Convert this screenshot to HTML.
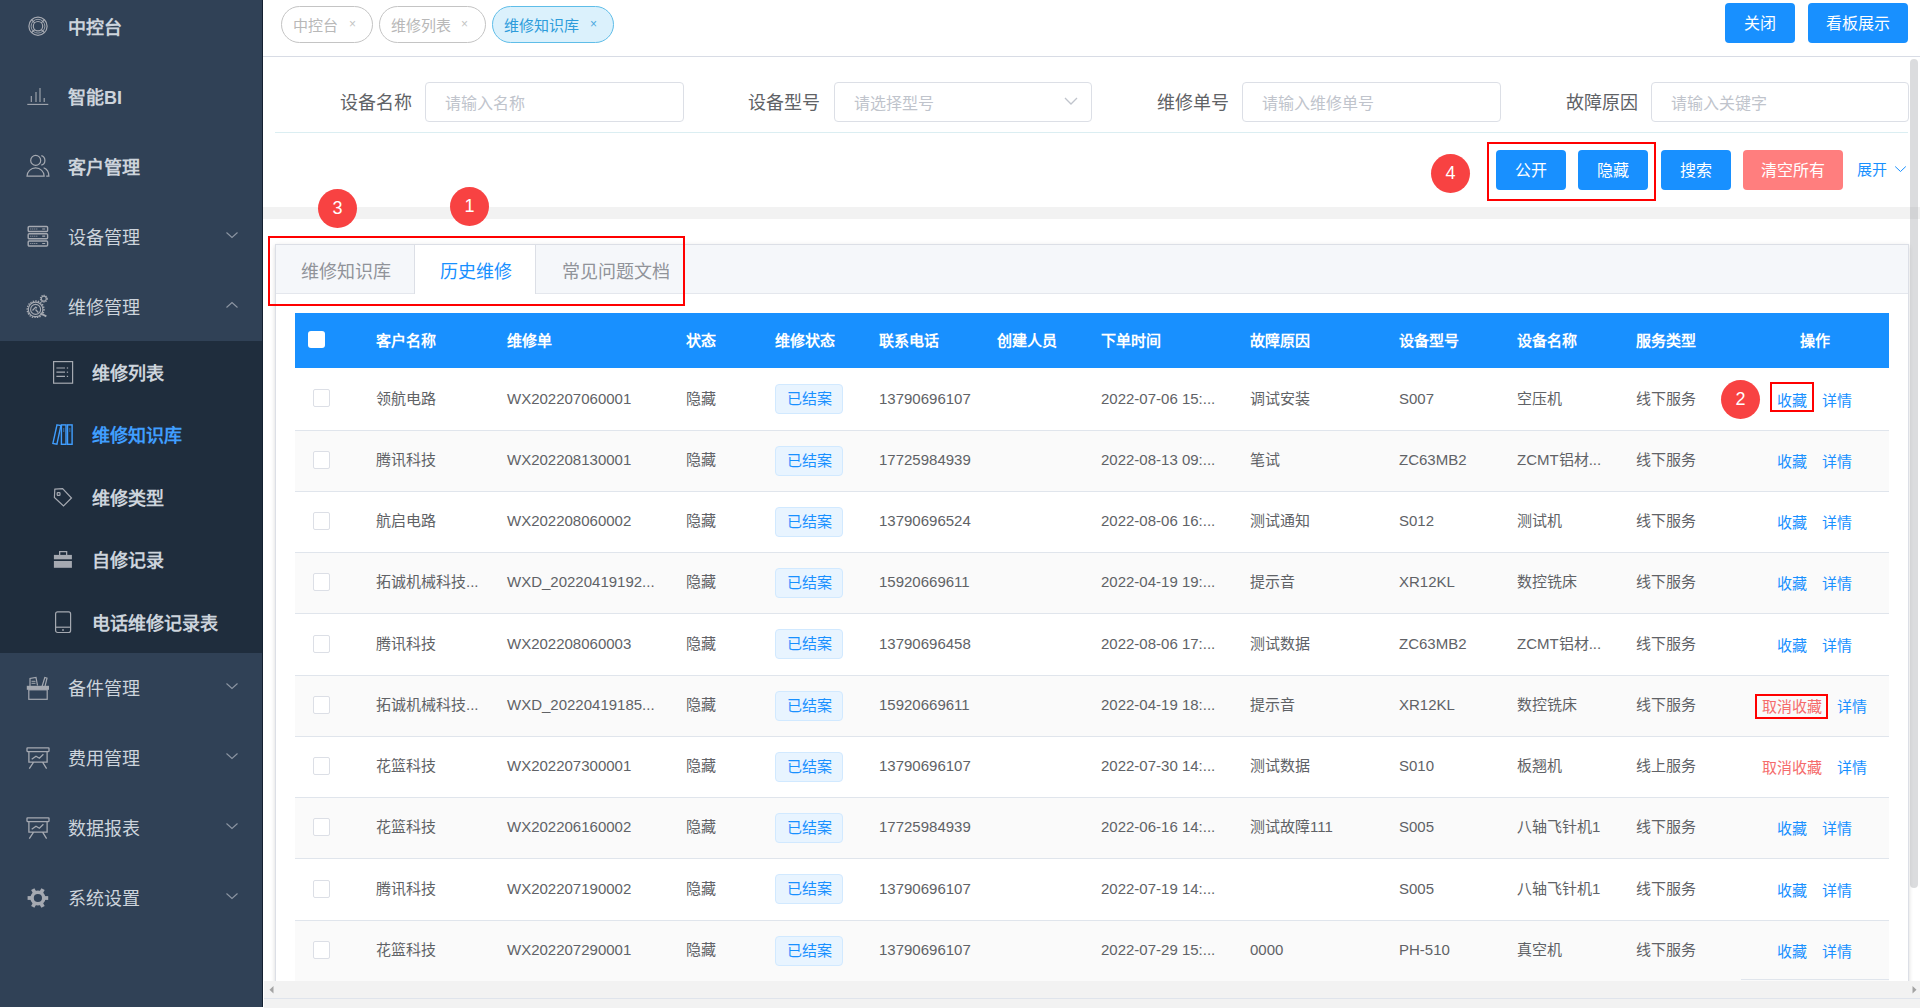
<!DOCTYPE html><html lang="zh-CN"><head><meta charset="utf-8"><title>维修知识库</title><style>
*{box-sizing:border-box;margin:0;padding:0}
html,body{width:1920px;height:1008px;overflow:hidden;background:#fff}
body{font-family:"Liberation Sans",sans-serif;color:#606266;position:relative}
.abs{position:absolute}
.sb{position:absolute;left:0;top:0;width:263px;height:1007px;background:#304156;overflow:hidden;border-right:1px solid #142131}
.sb .it{position:absolute;left:0;width:263px;height:70px}
.sb .it .tx{position:absolute;left:68px;top:2px;line-height:70px;font-size:18px;color:#cdd4dc;white-space:nowrap}
.sb .it .tx.b{font-weight:bold}
.sb .it svg.ic{position:absolute;left:27px;top:25px}
.sb .it svg.ch{position:absolute;left:225px;top:30px}
.sb .sub{position:absolute;left:0;top:341px;width:263px;height:312px;background:#1f2d3d}
.sb .si{position:absolute;left:0;width:263px;height:62.4px}
.sb .si .tx{position:absolute;left:92px;top:2px;line-height:62.4px;font-size:18px;font-weight:bold;color:#cdd4dc;white-space:nowrap}
.sb .si svg{position:absolute;left:52px;top:20px}
.tag{position:absolute;top:6px;height:37px;border:1px solid #c4c4c4;border-radius:19px;font-size:15px;line-height:37px;color:#b8b8b8;padding-left:11px;white-space:nowrap}
.tag .x{position:absolute;top:-1px;font-size:12px;color:#c4c4c4}
.btn{position:absolute;height:40px;border-radius:4px;background:#1890ff;color:#fff;font-size:16px;line-height:42px;text-align:center;white-space:nowrap}
.lbl{position:absolute;top:83px;height:40px;line-height:40px;font-size:18px;color:#606266;white-space:nowrap}
.inp{position:absolute;top:82px;height:40px;width:259px;border:1px solid #dcdfe6;border-radius:4px;font-size:16px;line-height:41px;color:#c0c4cc;padding-left:19px;white-space:nowrap}
.badge{position:absolute;width:39px;height:39px;border-radius:50%;background:#f84242;color:#fff;font-size:18px;line-height:39px;text-align:center}
.redbox{position:absolute;border:2px solid #ff0000}
.th{position:absolute;top:313px;height:55px;line-height:55px;font-size:15px;font-weight:bold;color:#fff;white-space:nowrap}
.row{position:absolute;left:295px;width:1594px;border-bottom:1px solid #e0e5ec}
.row.s{background:#fafafa}
.td{position:absolute;top:0;font-size:15px;color:#606266;white-space:nowrap}
.cb{position:absolute;width:17px;height:18px;border:1px solid #dcdfe6;border-radius:2px;background:#fff}
.st{position:absolute;left:480px;width:68px;height:30px;border:1px solid #d1e9ff;background:#e8f4ff;border-radius:4px;color:#1890ff;font-size:15px;line-height:28px;text-align:center}
.lk{color:#1890ff}
.lkr{color:#f56c6c}
</style></head><body><div class="sb"><div class="it" style="top:-9px"><span class="tx b">中控台</span></div><div class="it" style="top:61px"><span class="tx b">智能BI</span></div><div class="it" style="top:131px"><span class="tx b">客户管理</span></div><div class="it" style="top:201px"><span class="tx">设备管理</span><svg class="ch" width="14" height="8" viewBox="0 0 14 8"><path d="M1.5 1.5l5.5 5 5.5-5" fill="none" stroke="#8d96a3" stroke-width="1.1"/></svg></div><div class="it" style="top:271px"><span class="tx">维修管理</span><svg class="ch" width="14" height="8" viewBox="0 0 14 8"><path d="M1.5 6.5l5.5-5 5.5 5" fill="none" stroke="#8d96a3" stroke-width="1.1"/></svg></div><div class="it" style="top:652px"><span class="tx">备件管理</span><svg class="ch" width="14" height="8" viewBox="0 0 14 8"><path d="M1.5 1.5l5.5 5 5.5-5" fill="none" stroke="#8d96a3" stroke-width="1.1"/></svg></div><div class="it" style="top:722px"><span class="tx">费用管理</span><svg class="ch" width="14" height="8" viewBox="0 0 14 8"><path d="M1.5 1.5l5.5 5 5.5-5" fill="none" stroke="#8d96a3" stroke-width="1.1"/></svg></div><div class="it" style="top:792px"><span class="tx">数据报表</span><svg class="ch" width="14" height="8" viewBox="0 0 14 8"><path d="M1.5 1.5l5.5 5 5.5-5" fill="none" stroke="#8d96a3" stroke-width="1.1"/></svg></div><div class="it" style="top:862px"><span class="tx">系统设置</span><svg class="ch" width="14" height="8" viewBox="0 0 14 8"><path d="M1.5 1.5l5.5 5 5.5-5" fill="none" stroke="#8d96a3" stroke-width="1.1"/></svg></div><div class="sub"><div class="si" style="top:0.0px"><span class="tx">维修列表</span></div><div class="si" style="top:62.4px"><span class="tx" style="color:#409eff">维修知识库</span></div><div class="si" style="top:124.8px"><span class="tx">维修类型</span></div><div class="si" style="top:187.2px"><span class="tx">自修记录</span></div><div class="si" style="top:249.6px"><span class="tx">电话维修记录表</span></div></div></div><svg class="abs" style="left:26px;top:14px" width="24" height="24" viewBox="0 0 24 24"><g fill="none" stroke="#a5a9b1" stroke-width="1.2"><circle cx="12" cy="12.2" r="9.1"/><circle cx="12" cy="12.2" r="4.7"/><circle cx="12" cy="12.2" r="6.9" stroke-width="0.9"/><path d="M8.7 8.9L5.6 5.8M15.3 8.9l3.1-3.1M8.7 15.5l-3.1 3.1M15.3 15.5l3.1 3.1"/></g></svg><svg class="abs" style="left:26px;top:84px" width="24" height="24" viewBox="0 0 24 24"><g fill="none" stroke="#a5a9b1" stroke-width="1.1"><path d="M1.3 20.4h21"/><path d="M5.3 12v6M10 8v10M14 4v14M18.2 14v4"/></g></svg><svg class="abs" style="left:26px;top:154px" width="24" height="24" viewBox="0 0 24 24"><g fill="none" stroke="#a5a9b1" stroke-width="1.2"><circle cx="9.7" cy="6.4" r="5"/><path d="M15.3 1.6a5 5 0 0 1 0 9.6"/><path d="M1 22.2a8.6 8.3 0 0 1 17.2 0z"/><path d="M17.6 13.8c3.2 1.2 5.3 4.5 5.3 8.4h-2.7"/></g></svg><svg class="abs" style="left:26px;top:224px" width="24" height="24" viewBox="0 0 24 24"><g fill="none" stroke="#a5a9b1" stroke-width="1.4"><rect x="2.2" y="2.5" width="19.4" height="5" rx="1"/><rect x="2.2" y="9.7" width="19.4" height="5" rx="1"/><rect x="2.2" y="17" width="19.4" height="5" rx="1"/></g><g stroke="#a5a9b1" stroke-width="1" stroke-dasharray="1 1"><path d="M4.3 5h7.7M4.3 12.2h7.7M4.3 19.5h7.7"/></g><g stroke="#a5a9b1" stroke-width="1.2"><path d="M16.2 5h3M16.2 12.2h3M16.2 19.5h3"/></g></svg><svg class="abs" style="left:26px;top:294px" width="24" height="24" viewBox="0 0 24 24"><g fill="none" stroke="#a5a9b1"><circle cx="9.6" cy="15.4" r="7.3" stroke-width="1.2"/><circle cx="9.6" cy="15.4" r="8.4" stroke-width="1.4" stroke-dasharray="1.4 1.2"/><circle cx="9.6" cy="15.4" r="5" stroke-width="1.1"/><circle cx="17.8" cy="4.7" r="2.5" stroke-width="1.2"/><circle cx="17.8" cy="4.7" r="3.4" stroke-width="1.2" stroke-dasharray="1.2 1"/><path d="M6.5 16.5l3.2-3.4 1.2 1.2M9.5 15.5l2.8 3" stroke-width="1.3"/><path d="M14.5 19.2l5.8 3.2" stroke-width="1.8"/></g></svg><svg class="abs" style="left:26px;top:676px" width="24" height="24" viewBox="0 0 24 24"><g fill="none" stroke="#a5a9b1" stroke-width="1.2"><rect x="2.8" y="13.8" width="18.4" height="9.5"/><path d="M4 10V2.5l6-1 1.5 8M15.6 12l3.2-10.5 2.2.6-2.3 9.5"/><path d="M5.5 5.3h4M5.5 7.3h4" stroke-width="1"/></g><rect x="0.8" y="9.8" width="22.2" height="4" fill="#a5a9b1"/></svg><svg class="abs" style="left:26px;top:746px" width="24" height="24" viewBox="0 0 24 24"><g fill="none" stroke="#a5a9b1" stroke-width="1.3"><rect x="1" y="1.8" width="22" height="3.8" rx=".5"/><path d="M2.9 5.6v10.6h18.2V5.6M7.6 16.2L3.3 22.6M16.6 16.2l4 6.4M5.7 13.3l4.3-3.1 3.4 2 4-3.9"/></g></svg><svg class="abs" style="left:26px;top:816px" width="24" height="24" viewBox="0 0 24 24"><g fill="none" stroke="#a5a9b1" stroke-width="1.3"><rect x="1" y="1.8" width="22" height="3.8" rx=".5"/><path d="M2.9 5.6v10.6h18.2V5.6M7.6 16.2L3.3 22.6M16.6 16.2l4 6.4M5.7 13.3l4.3-3.1 3.4 2 4-3.9"/></g></svg><svg class="abs" style="left:26px;top:886px" width="24" height="24" viewBox="0 0 24 24"><g fill="#a5a9b1"><circle cx="11.9" cy="12" r="7.6"/><rect x="17" y="10.1" width="5.2" height="3.8" transform="rotate(0 11.9 12)"/><rect x="17" y="10.1" width="5.2" height="3.8" transform="rotate(60 11.9 12)"/><rect x="17" y="10.1" width="5.2" height="3.8" transform="rotate(120 11.9 12)"/><rect x="17" y="10.1" width="5.2" height="3.8" transform="rotate(180 11.9 12)"/><rect x="17" y="10.1" width="5.2" height="3.8" transform="rotate(240 11.9 12)"/><rect x="17" y="10.1" width="5.2" height="3.8" transform="rotate(300 11.9 12)"/></g><circle cx="11.9" cy="12" r="4.1" fill="#304156"/></svg><svg class="abs" style="left:52px;top:360px" width="24" height="24" viewBox="0 0 24 24"><g fill="none" stroke="#a5a9b1" stroke-width="1.2"><rect x="1.6" y="1.6" width="19" height="21.6"/><path d="M4.4 8h8.6M4.4 12.2h8.6M4.4 16.4h8.6"/></g><g fill="#a5a9b1"><rect x="14.8" y="7.4" width="1.3" height="1.2"/><rect x="14.8" y="11.6" width="1.3" height="1.2"/><rect x="14.8" y="15.8" width="1.3" height="1.2"/></g></svg><svg class="abs" style="left:52px;top:424px" width="24" height="24" viewBox="0 0 24 24"><g fill="none" stroke="#409eff" stroke-width="1.4"><path d="M5 0.9l3.9 0.7L4.9 20.2l-4-.8z"/><rect x="9.4" y="0.9" width="4.6" height="19.4"/><rect x="15.5" y="0.9" width="4.6" height="19.4"/><path d="M7.3 4.5h.01M7 6.5h.01M6.7 8.5h.01M11.7 4.5v4M17.8 4.5v4" stroke-width="1.2" stroke-dasharray="1 1"/></g></svg><svg class="abs" style="left:52px;top:486px" width="24" height="24" viewBox="0 0 24 24"><g fill="none" stroke="#a5a9b1" stroke-width="1.2"><path d="M2.8 3.2l7.8-.6 8.9 9.4-8 8-9.1-8.6z"/><rect x="5.2" y="6.6" width="2.8" height="2.8" rx=".6"/></g></svg><svg class="abs" style="left:52px;top:548px" width="24" height="24" viewBox="0 0 24 24"><g fill="#a5a9b1"><path d="M7 3h8.3v3.9h-1.3V4.2H8.3v2.7H7z"/><rect x="1.9" y="6.9" width="18" height="4.4"/><rect x="1.9" y="13" width="18" height="6.8"/></g></svg><svg class="abs" style="left:52px;top:610px" width="24" height="24" viewBox="0 0 24 24"><g fill="none" stroke="#a5a9b1" stroke-width="1.2"><rect x="3.6" y="1.9" width="15" height="20.6" rx="2"/><path d="M3.6 17.2h15"/></g><rect x="10.2" y="19.2" width="1.6" height="1.6" fill="#a5a9b1"/></svg><div class="abs" style="left:263px;top:0;width:1657px;height:57px;background:#fff;border-bottom:1px solid #d8dce5"></div><div class="tag" style="left:281px;width:92px">中控台<span class="x" style="left:67px">×</span></div><div class="tag" style="left:379px;width:107px">维修列表<span class="x" style="left:81px">×</span></div><div class="tag" style="left:492px;width:122px;border-color:#5fbde8;background:#dbf1fc;color:#2d9cdb">维修知识库<span class="x" style="left:97px;color:#4aa8e0">×</span></div><div class="btn" style="left:1725px;top:3px;width:70px">关闭</div><div class="btn" style="left:1808px;top:3px;width:100px">看板展示</div><div class="lbl" style="left:340px">设备名称</div><div class="inp" style="left:425px;width:259px">请输入名称</div><div class="lbl" style="left:748px">设备型号</div><div class="inp" style="left:834px;width:258px">请选择型号</div><div class="lbl" style="left:1157px">维修单号</div><div class="inp" style="left:1242px;width:259px">请输入维修单号</div><div class="lbl" style="left:1566px">故障原因</div><div class="inp" style="left:1651px;width:258px">请输入关键字</div><svg class="abs" style="left:1064px;top:97px" width="14" height="8" viewBox="0 0 14 8"><path d="M1 1l6 6 6-6" fill="none" stroke="#c0c4cc" stroke-width="1.3"/></svg><div class="abs" style="left:275px;top:132px;width:1633px;height:1px;background:#dbeef2"></div><div class="badge" style="left:1431px;top:154px">4</div><div class="redbox" style="left:1487px;top:142px;width:169px;height:59px"></div><div class="btn" style="left:1496px;top:150px;width:70px">公开</div><div class="btn" style="left:1578px;top:150px;width:70px">隐藏</div><div class="btn" style="left:1661px;top:150px;width:70px">搜索</div><div class="btn" style="left:1743px;top:150px;width:100px;background:#ff7e7e">清空所有</div><div class="abs" style="left:1857px;top:150px;line-height:40px;font-size:15px;color:#1890ff">展开</div><svg class="abs" style="left:1894px;top:165px" width="13" height="8" viewBox="0 0 13 8"><path d="M1.2 1.5l5.3 5 5.3-5" fill="none" stroke="#1890ff" stroke-width="1"/></svg><div class="abs" style="left:263px;top:207px;width:1657px;height:12px;background:#f2f2f2"></div><div class="abs" style="left:275px;top:244px;width:1634px;height:760px;border:1px solid #dcdfe6;box-shadow:0 2px 4px rgba(0,0,0,.12),0 0 6px rgba(0,0,0,.04);background:#fff"></div><div class="abs" style="left:276px;top:245px;width:1632px;height:49px;background:#f5f7fa;border-bottom:1px solid #e4e7ed"></div><div class="abs" style="left:414px;top:245px;width:122px;height:49px;background:#fff;border-left:1px solid #dcdfe6;border-right:1px solid #dcdfe6"></div><div class="abs" style="left:301px;top:247px;line-height:50px;font-size:18px;color:#909399">维修知识库</div><div class="abs" style="left:440px;top:247px;line-height:50px;font-size:18px;color:#1890ff">历史维修</div><div class="abs" style="left:562px;top:247px;line-height:50px;font-size:18px;color:#909399">常见问题文档</div><div class="redbox" style="left:268px;top:236px;width:417px;height:70px"></div><div class="badge" style="left:318px;top:189px">3</div><div class="badge" style="left:450px;top:187px">1</div><div class="abs" style="left:295px;top:313px;width:1594px;height:55px;background:#1890ff"></div><div class="abs" style="left:308px;top:331px;width:17px;height:17px;background:#fff;border-radius:3px"></div><div class="th" style="left:376px">客户名称</div><div class="th" style="left:507px">维修单</div><div class="th" style="left:686px">状态</div><div class="th" style="left:775px">维修状态</div><div class="th" style="left:879px">联系电话</div><div class="th" style="left:997px">创建人员</div><div class="th" style="left:1101px">下单时间</div><div class="th" style="left:1250px">故障原因</div><div class="th" style="left:1399px">设备型号</div><div class="th" style="left:1517px">设备名称</div><div class="th" style="left:1636px">服务类型</div><div class="th" style="left:1800px">操作</div><div class="row" style="top:368px;height:63px"><div class="cb" style="left:18px;top:21px"></div><div class="td" style="left:81px;top:0px;line-height:62px">领航电路</div><div class="td" style="left:212px;top:0px;line-height:62px">WX202207060001</div><div class="td" style="left:391px;top:0px;line-height:62px">隐藏</div><div class="st" style="top:16px">已结案</div><div class="td" style="left:584px;top:0px;line-height:62px">13790696107</div><div class="td" style="left:806px;top:0px;line-height:62px">2022-07-06 15:...</div><div class="td" style="left:955px;top:0px;line-height:62px">调试安装</div><div class="td" style="left:1104px;top:0px;line-height:62px">S007</div><div class="td" style="left:1222px;top:0px;line-height:62px">空压机</div><div class="td" style="left:1341px;top:0px;line-height:62px">线下服务</div><div class="td" style="left:1482px;top:0px;line-height:62px;color:#1890ff;top:1.5px">收藏</div><div class="td" style="left:1527px;top:0px;line-height:62px;color:#1890ff;top:1.5px">详情</div></div><div class="row s" style="top:431px;height:61px"><div class="cb" style="left:18px;top:20px"></div><div class="td" style="left:81px;top:-1px;line-height:60px">腾讯科技</div><div class="td" style="left:212px;top:-1px;line-height:60px">WX202208130001</div><div class="td" style="left:391px;top:-1px;line-height:60px">隐藏</div><div class="st" style="top:15px">已结案</div><div class="td" style="left:584px;top:-1px;line-height:60px">17725984939</div><div class="td" style="left:806px;top:-1px;line-height:60px">2022-08-13 09:...</div><div class="td" style="left:955px;top:-1px;line-height:60px">笔试</div><div class="td" style="left:1104px;top:-1px;line-height:60px">ZC63MB2</div><div class="td" style="left:1222px;top:-1px;line-height:60px">ZCMT铝材...</div><div class="td" style="left:1341px;top:-1px;line-height:60px">线下服务</div><div class="td" style="left:1482px;top:-1px;line-height:60px;color:#1890ff;top:0.5px">收藏</div><div class="td" style="left:1527px;top:-1px;line-height:60px;color:#1890ff;top:0.5px">详情</div></div><div class="row" style="top:492px;height:61px"><div class="cb" style="left:18px;top:20px"></div><div class="td" style="left:81px;top:-1px;line-height:60px">航启电路</div><div class="td" style="left:212px;top:-1px;line-height:60px">WX202208060002</div><div class="td" style="left:391px;top:-1px;line-height:60px">隐藏</div><div class="st" style="top:15px">已结案</div><div class="td" style="left:584px;top:-1px;line-height:60px">13790696524</div><div class="td" style="left:806px;top:-1px;line-height:60px">2022-08-06 16:...</div><div class="td" style="left:955px;top:-1px;line-height:60px">测试通知</div><div class="td" style="left:1104px;top:-1px;line-height:60px">S012</div><div class="td" style="left:1222px;top:-1px;line-height:60px">测试机</div><div class="td" style="left:1341px;top:-1px;line-height:60px">线下服务</div><div class="td" style="left:1482px;top:-1px;line-height:60px;color:#1890ff;top:0.5px">收藏</div><div class="td" style="left:1527px;top:-1px;line-height:60px;color:#1890ff;top:0.5px">详情</div></div><div class="row s" style="top:553px;height:61px"><div class="cb" style="left:18px;top:20px"></div><div class="td" style="left:81px;top:-1px;line-height:60px">拓诚机械科技...</div><div class="td" style="left:212px;top:-1px;line-height:60px">WXD_20220419192...</div><div class="td" style="left:391px;top:-1px;line-height:60px">隐藏</div><div class="st" style="top:15px">已结案</div><div class="td" style="left:584px;top:-1px;line-height:60px">15920669611</div><div class="td" style="left:806px;top:-1px;line-height:60px">2022-04-19 19:...</div><div class="td" style="left:955px;top:-1px;line-height:60px">提示音</div><div class="td" style="left:1104px;top:-1px;line-height:60px">XR12KL</div><div class="td" style="left:1222px;top:-1px;line-height:60px">数控铣床</div><div class="td" style="left:1341px;top:-1px;line-height:60px">线下服务</div><div class="td" style="left:1482px;top:-1px;line-height:60px;color:#1890ff;top:0.5px">收藏</div><div class="td" style="left:1527px;top:-1px;line-height:60px;color:#1890ff;top:0.5px">详情</div></div><div class="row" style="top:614px;height:62px"><div class="cb" style="left:18px;top:21px"></div><div class="td" style="left:81px;top:-1px;line-height:61px">腾讯科技</div><div class="td" style="left:212px;top:-1px;line-height:61px">WX202208060003</div><div class="td" style="left:391px;top:-1px;line-height:61px">隐藏</div><div class="st" style="top:15px">已结案</div><div class="td" style="left:584px;top:-1px;line-height:61px">13790696458</div><div class="td" style="left:806px;top:-1px;line-height:61px">2022-08-06 17:...</div><div class="td" style="left:955px;top:-1px;line-height:61px">测试数据</div><div class="td" style="left:1104px;top:-1px;line-height:61px">ZC63MB2</div><div class="td" style="left:1222px;top:-1px;line-height:61px">ZCMT铝材...</div><div class="td" style="left:1341px;top:-1px;line-height:61px">线下服务</div><div class="td" style="left:1482px;top:-1px;line-height:61px;color:#1890ff;top:0.5px">收藏</div><div class="td" style="left:1527px;top:-1px;line-height:61px;color:#1890ff;top:0.5px">详情</div></div><div class="row s" style="top:676px;height:61px"><div class="cb" style="left:18px;top:20px"></div><div class="td" style="left:81px;top:-1px;line-height:60px">拓诚机械科技...</div><div class="td" style="left:212px;top:-1px;line-height:60px">WXD_20220419185...</div><div class="td" style="left:391px;top:-1px;line-height:60px">隐藏</div><div class="st" style="top:15px">已结案</div><div class="td" style="left:584px;top:-1px;line-height:60px">15920669611</div><div class="td" style="left:806px;top:-1px;line-height:60px">2022-04-19 18:...</div><div class="td" style="left:955px;top:-1px;line-height:60px">提示音</div><div class="td" style="left:1104px;top:-1px;line-height:60px">XR12KL</div><div class="td" style="left:1222px;top:-1px;line-height:60px">数控铣床</div><div class="td" style="left:1341px;top:-1px;line-height:60px">线下服务</div><div class="td" style="left:1467px;top:-1px;line-height:60px;color:#f56c6c;top:0.5px">取消收藏</div><div class="td" style="left:1542px;top:-1px;line-height:60px;color:#1890ff;top:0.5px">详情</div></div><div class="row" style="top:737px;height:61px"><div class="cb" style="left:18px;top:20px"></div><div class="td" style="left:81px;top:-1px;line-height:60px">花篮科技</div><div class="td" style="left:212px;top:-1px;line-height:60px">WX202207300001</div><div class="td" style="left:391px;top:-1px;line-height:60px">隐藏</div><div class="st" style="top:15px">已结案</div><div class="td" style="left:584px;top:-1px;line-height:60px">13790696107</div><div class="td" style="left:806px;top:-1px;line-height:60px">2022-07-30 14:...</div><div class="td" style="left:955px;top:-1px;line-height:60px">测试数据</div><div class="td" style="left:1104px;top:-1px;line-height:60px">S010</div><div class="td" style="left:1222px;top:-1px;line-height:60px">板翘机</div><div class="td" style="left:1341px;top:-1px;line-height:60px">线上服务</div><div class="td" style="left:1467px;top:-1px;line-height:60px;color:#f56c6c;top:0.5px">取消收藏</div><div class="td" style="left:1542px;top:-1px;line-height:60px;color:#1890ff;top:0.5px">详情</div></div><div class="row s" style="top:798px;height:61px"><div class="cb" style="left:18px;top:20px"></div><div class="td" style="left:81px;top:-1px;line-height:60px">花篮科技</div><div class="td" style="left:212px;top:-1px;line-height:60px">WX202206160002</div><div class="td" style="left:391px;top:-1px;line-height:60px">隐藏</div><div class="st" style="top:15px">已结案</div><div class="td" style="left:584px;top:-1px;line-height:60px">17725984939</div><div class="td" style="left:806px;top:-1px;line-height:60px">2022-06-16 14:...</div><div class="td" style="left:955px;top:-1px;line-height:60px">测试故障111</div><div class="td" style="left:1104px;top:-1px;line-height:60px">S005</div><div class="td" style="left:1222px;top:-1px;line-height:60px">八轴飞针机1</div><div class="td" style="left:1341px;top:-1px;line-height:60px">线下服务</div><div class="td" style="left:1482px;top:-1px;line-height:60px;color:#1890ff;top:0.5px">收藏</div><div class="td" style="left:1527px;top:-1px;line-height:60px;color:#1890ff;top:0.5px">详情</div></div><div class="row" style="top:859px;height:62px"><div class="cb" style="left:18px;top:21px"></div><div class="td" style="left:81px;top:-1px;line-height:61px">腾讯科技</div><div class="td" style="left:212px;top:-1px;line-height:61px">WX202207190002</div><div class="td" style="left:391px;top:-1px;line-height:61px">隐藏</div><div class="st" style="top:15px">已结案</div><div class="td" style="left:584px;top:-1px;line-height:61px">13790696107</div><div class="td" style="left:806px;top:-1px;line-height:61px">2022-07-19 14:...</div><div class="td" style="left:955px;top:-1px;line-height:61px"></div><div class="td" style="left:1104px;top:-1px;line-height:61px">S005</div><div class="td" style="left:1222px;top:-1px;line-height:61px">八轴飞针机1</div><div class="td" style="left:1341px;top:-1px;line-height:61px">线下服务</div><div class="td" style="left:1482px;top:-1px;line-height:61px;color:#1890ff;top:0.5px">收藏</div><div class="td" style="left:1527px;top:-1px;line-height:61px;color:#1890ff;top:0.5px">详情</div></div><div class="row s" style="top:921px;height:61px;border-bottom:0"><div class="cb" style="left:18px;top:20px"></div><div class="td" style="left:81px;top:-1px;line-height:60px">花篮科技</div><div class="td" style="left:212px;top:-1px;line-height:60px">WX202207290001</div><div class="td" style="left:391px;top:-1px;line-height:60px">隐藏</div><div class="st" style="top:15px">已结案</div><div class="td" style="left:584px;top:-1px;line-height:60px">13790696107</div><div class="td" style="left:806px;top:-1px;line-height:60px">2022-07-29 15:...</div><div class="td" style="left:955px;top:-1px;line-height:60px">0000</div><div class="td" style="left:1104px;top:-1px;line-height:60px">PH-510</div><div class="td" style="left:1222px;top:-1px;line-height:60px">真空机</div><div class="td" style="left:1341px;top:-1px;line-height:60px">线下服务</div><div class="td" style="left:1482px;top:-1px;line-height:60px;color:#1890ff;top:0.5px">收藏</div><div class="td" style="left:1527px;top:-1px;line-height:60px;color:#1890ff;top:0.5px">详情</div></div><div class="abs" style="left:1741px;top:979px;width:148px;height:1px;background:#e0e5ec"></div><div class="badge" style="left:1721px;top:380px">2</div><div class="redbox" style="left:1770px;top:382px;width:44px;height:30px"></div><div class="redbox" style="left:1755px;top:694px;width:73px;height:25px"></div><div class="abs" style="left:264px;top:981px;width:1656px;height:27px;background:#f2f2f2"></div><div class="abs" style="left:264px;top:998px;width:1656px;height:1px;background:#dfe4ec"></div><svg class="abs" style="left:269px;top:985px" width="5" height="9" viewBox="0 0 5 9"><path d="M4.5 1v7.5L.5 4.75z" fill="#a3a3a3"/></svg><svg class="abs" style="left:1912px;top:985px" width="5" height="9" viewBox="0 0 5 9"><path d="M.5 1v7.5l4-3.75z" fill="#a3a3a3"/></svg><div class="abs" style="left:1910px;top:59px;width:8px;height:829px;background:rgba(132,134,142,.29);border-radius:4px"></div></body></html>
